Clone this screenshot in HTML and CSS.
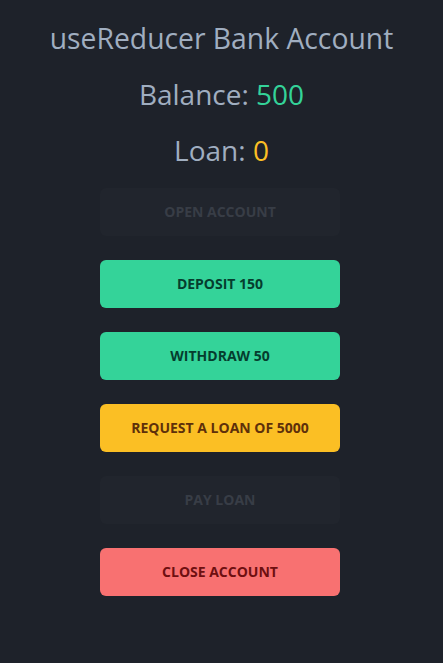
FILE: index.html
```html
<!DOCTYPE html>
<html lang="en">
<head>
<meta charset="utf-8">
<title>useReducer Bank Account</title>
<link rel="stylesheet" href="styles.css">
</head>
<body>
<div class="app">
  <h1 class="title">useReducer Bank Account</h1>
  <p class="stat">Balance: <span class="green">500</span></p>
  <p class="stat">Loan: <span class="yellow">0</span></p>
  <div class="actions">
    <button class="btn" disabled>Open account</button>
    <button class="btn btn-green">Deposit 150</button>
    <button class="btn btn-green">Withdraw 50</button>
    <button class="btn btn-yellow">Request a loan of 5000</button>
    <button class="btn" disabled>Pay loan</button>
    <button class="btn btn-red">Close account</button>
  </div>
</div>
</body>
</html>
```

FILE: styles.css
```css
html, body {
  margin: 0;
  padding: 0;
  background: #1e222a;
  height: 100%;
}
body {
  font-family: "Open Sans", "Noto Sans", sans-serif;
  color: #a0aec0;
}
.app {
  display: flex;
  flex-direction: column;
  align-items: center;
  padding-top: 10px;
}
.title, .stat {
  margin: 0;
  font-weight: 400;
  font-size: 28px;
  line-height: 56px;
}
.title {
  font-size: 28.3px;
}
.green { color: #34d399; }
.yellow { color: #fbbf24; }
.actions {
  display: flex;
  flex-direction: column;
  gap: 24px;
  margin-top: 10px;
  margin-right: 3px;
}
.btn {
  width: 240px;
  height: 48px;
  border: none;
  border-radius: 6px;
  font-family: inherit;
  font-weight: 700;
  font-size: 14px;
  text-transform: uppercase;
  background: #21252d;
  color: #383d46;
  padding: 0 0 2px;
}
.btn-green { background: #34d399; color: #053d2e; }
.btn-yellow { background: #fbbf24; color: #5e300a; }
.btn-red { background: #f87171; color: #6e0f10; }
```
